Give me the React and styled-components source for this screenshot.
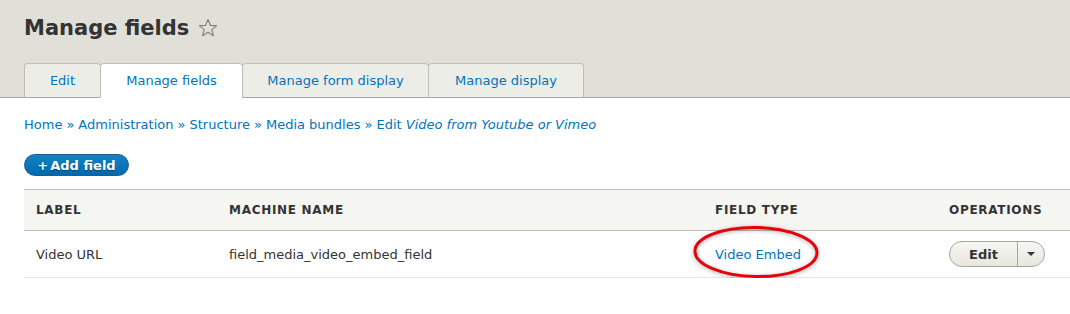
import React from "react";
import styled, { createGlobalStyle } from "styled-components";

const Global = createGlobalStyle`
  html, body { margin: 0; padding: 0; background: #fff; }
  body { font-family: "DejaVu Sans", Verdana, sans-serif; color: #222330; font-size: 13px; }
  * { box-sizing: border-box; }
`;

const Header = styled.header`
  background: #e0e0d8;
  border-bottom: 1px solid #a6a6a6;
  padding: 14px 0 0 24px;
  height: 98px;
  display: flex;
  flex-direction: column;
  justify-content: space-between;
`;

const TitleRow = styled.div`
  display: flex;
  align-items: center;
  gap: 9px;
`;

const Title = styled.h1`
  margin: 0;
  font-size: 21px;
  font-weight: bold;
  color: #333;
  line-height: 28px;
`;

const Tabs = styled.nav`
  display: flex;
  margin-bottom: -1px;
`;

const Tab = styled.a`
  display: block;
  width: ${(p) => p.$w}px;
  height: 35px;
  text-align: center;
  line-height: 33px;
  font-size: 13px;
  color: #0074bd;
  text-decoration: none;
  background: ${(p) => (p.$active ? "#fff" : "#ededE7")};
  border: 1px solid #bfbfba;
  border-bottom: 1px solid ${(p) => (p.$active ? "#fff" : "#a6a6a6")};
  border-radius: 4px 4px 0 0;
  margin-left: -1px;
  &:first-child { margin-left: 0; }
`;

const Content = styled.main`
  padding: 18px 0 0 24px;
`;

const Breadcrumb = styled.div`
  font-size: 13px;
  color: #0074bd;
  line-height: 18px;
  a { color: #0074bd; text-decoration: none; }
  em { font-style: italic; }
`;

const Sep = styled.span`
  color: #0074bd;
  margin: 0 4px;
`;

const AddButton = styled.a`
  display: inline-flex;
  align-items: center;
  margin-top: 20px;
  height: 22px;
  width: 105px;
  justify-content: center;
  border-radius: 11px;
  background: linear-gradient(to bottom, #1582c6, #0069ad);
  border: 1px solid #1e5c90;
  color: #fff;
  font-weight: bold;
  font-size: 13px;
  text-decoration: none;
  text-shadow: 0 1px 1px rgba(0, 0, 0, 0.4);
`;

const Plus = styled.span`
  margin-right: 2px;
`;

const Table = styled.table`
  margin-top: 13px;
  width: 1046px;
  border-collapse: collapse;
  font-size: 13px;
`;

const HeadRow = styled.tr`
  background: #f5f5f2;
  border-top: 1px solid #bfbfba;
  border-bottom: 1px solid #bfbfba;
`;

const Th = styled.th`
  text-align: left;
  padding: 0 12px;
  height: 41px;
  font-weight: bold;
  font-size: 12px;
  letter-spacing: 0.7px;
  text-transform: uppercase;
  color: #333;
  width: ${(p) => p.$w || "auto"};
`;

const Row = styled.tr`
  border-bottom: 1px solid #e6e4df;
`;

const Td = styled.td`
  padding: 0 12px;
  height: 47px;
  color: #333;
  position: relative;
`;

const Link = styled.a`
  color: #0074bd;
  text-decoration: none;
`;

const Ellipse = styled.svg`
  position: absolute;
  left: -11px;
  top: -5px;
  overflow: visible;
  pointer-events: none;
  filter: drop-shadow(0 1px 2px rgba(0, 0, 0, 0.35));
`;

const Split = styled.div`
  display: inline-flex;
  vertical-align: middle;
  height: 26px;
  border: 1px solid #a6a6a6;
  border-radius: 13px;
  background: linear-gradient(to bottom, #f6f6f3, #e7e7df);
  overflow: hidden;
`;

const SplitMain = styled.span`
  display: flex;
  align-items: center;
  justify-content: center;
  width: 68px;
  font-weight: bold;
  font-size: 13px;
  color: #333;
  border-right: 1px solid #a6a6a6;
`;

const SplitToggle = styled.span`
  display: flex;
  align-items: center;
  justify-content: center;
  width: 26px;
`;

const Caret = styled.span`
  width: 0;
  height: 0;
  border-left: 4px solid transparent;
  border-right: 4px solid transparent;
  border-top: 4px solid #333;
`;

export default function App() {
  return (
    <>
      <Global />
      <Header>
        <TitleRow>
          <Title>Manage fields</Title>
          <svg width="20" height="20" viewBox="0 0 20 20">
            <path
              d="M10 1.5 L12.4 7.3 L18.6 7.6 L13.8 11.6 L15.4 17.7 L10 14.3 L4.6 17.7 L6.2 11.6 L1.4 7.6 L7.6 7.3 Z"
              fill="none"
              stroke="#868676"
              strokeWidth="1.2"
              strokeLinejoin="round"
            />
          </svg>
        </TitleRow>
        <Tabs>
          <Tab href="#" $w={77}>Edit</Tab>
          <Tab href="#" $w={143} $active>Manage fields</Tab>
          <Tab href="#" $w={187}>Manage form display</Tab>
          <Tab href="#" $w={156}>Manage display</Tab>
        </Tabs>
      </Header>
      <Content>
        <Breadcrumb>
          <a href="#">Home</a><Sep>»</Sep>
          <a href="#">Administration</a><Sep>»</Sep>
          <a href="#">Structure</a><Sep>»</Sep>
          <a href="#">Media bundles</a><Sep>»</Sep>
          <a href="#">Edit <em>Video from Youtube or Vimeo</em></a>
        </Breadcrumb>
        <AddButton href="#"><Plus>+</Plus>Add field</AddButton>
        <Table>
          <thead>
            <HeadRow>
              <Th $w="193px">Label</Th>
              <Th $w="486px">Machine name</Th>
              <Th $w="234px">Field type</Th>
              <Th>Operations</Th>
            </HeadRow>
          </thead>
          <tbody>
            <Row>
              <Td>Video URL</Td>
              <Td>field_media_video_embed_field</Td>
              <Td>
                <Link href="#">Video Embed</Link>
                <Ellipse width="126" height="54" viewBox="0 0 126 54">
                  <ellipse cx="64" cy="26" rx="61" ry="24.5" fill="none" stroke="#e8000b" strokeWidth="3" transform="rotate(1 64 26)" />
                </Ellipse>
              </Td>
              <Td>
                <Split>
                  <SplitMain>Edit</SplitMain>
                  <SplitToggle><Caret /></SplitToggle>
                </Split>
              </Td>
            </Row>
          </tbody>
        </Table>
      </Content>
    </>
  );
}
